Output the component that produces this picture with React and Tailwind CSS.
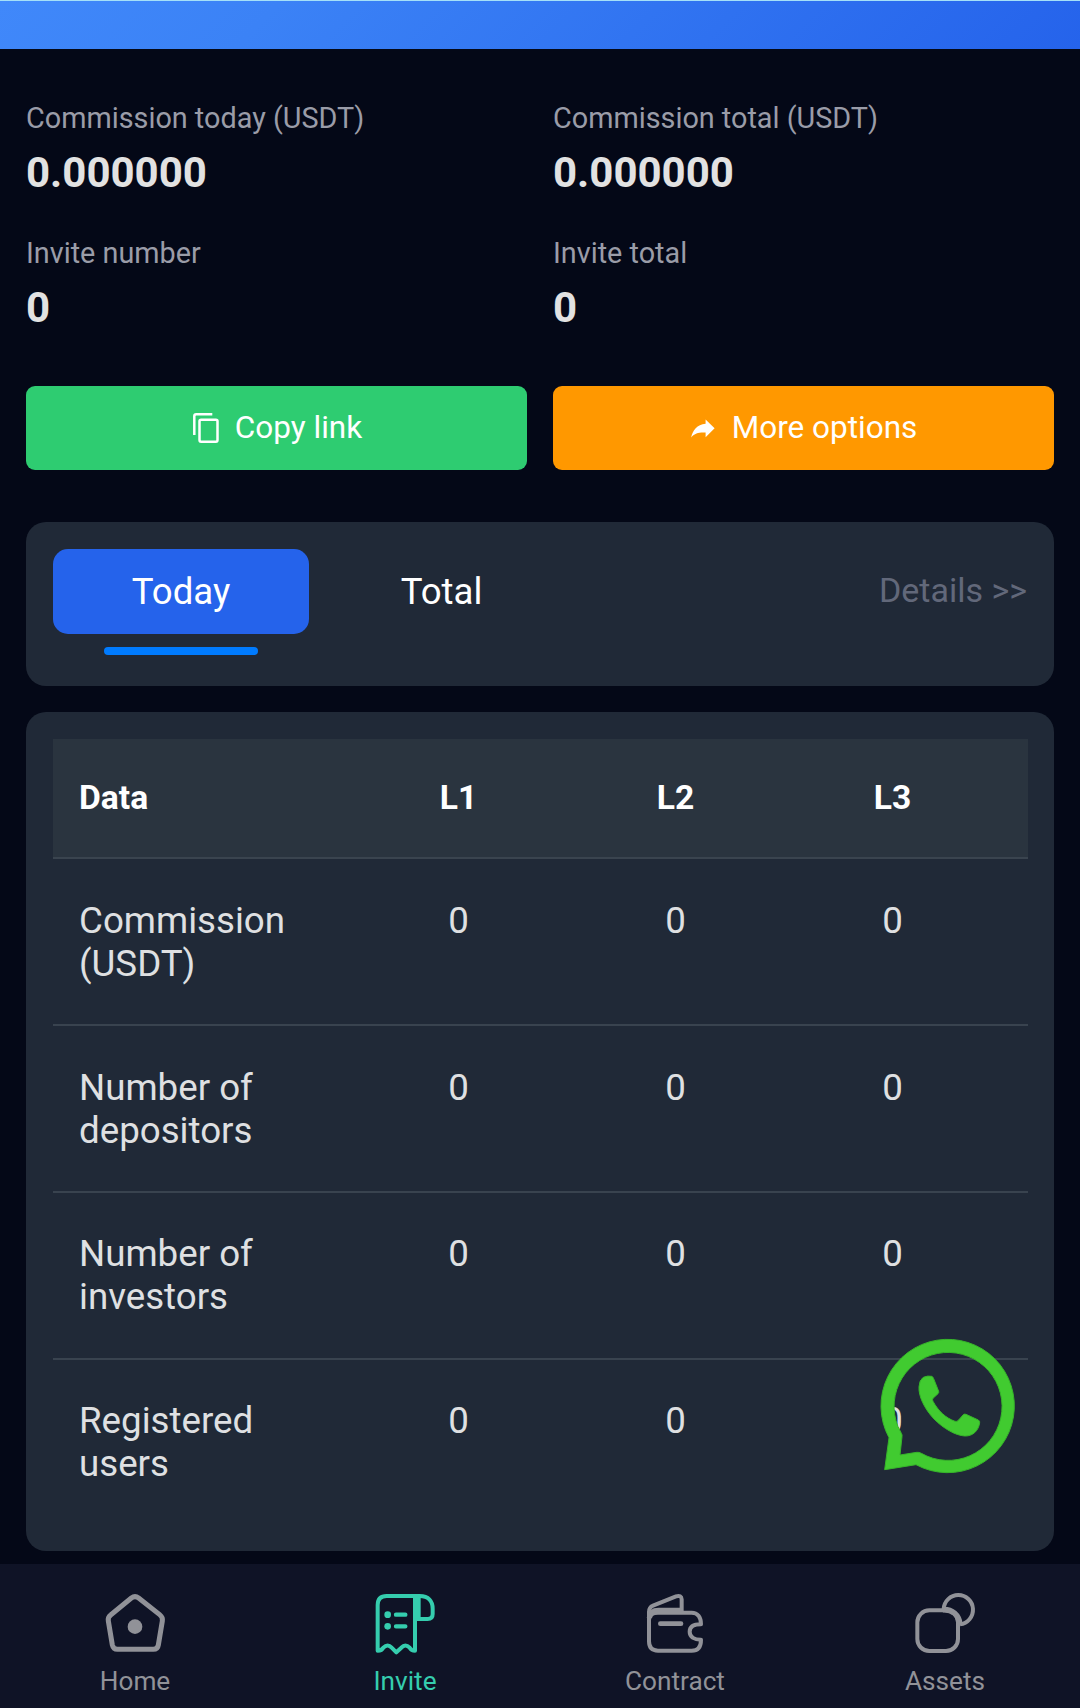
import { useState } from "react";

/* Figures shown at the top of the page */
const stats = [
  { label: "Commission today (USDT)", value: "0.000000" },
  { label: "Commission total (USDT)", value: "0.000000" },
  { label: "Invite number", value: "0" },
  { label: "Invite total", value: "0" },
];

const rows = [
  { name: "Commission (USDT)", values: [0, 0, 0] },
  { name: "Number of depositors", values: [0, 0, 0] },
  { name: "Number of investors", values: [0, 0, 0] },
  { name: "Registered users", values: [0, 0, 0] },
];

/* Icons */
function CopyIcon() {
  return (
    <svg className="w-[26px] h-[30px]" viewBox="0 0 26 30" fill="none" stroke="currentColor" strokeWidth="2.5">
      <path d="M1.3 22V3.2C1.3 2 2 1.3 3.2 1.3H19.3" />
      <rect x="6.5" y="6.7" width="18" height="22" rx="1.6" />
    </svg>
  );
}

function ShareIcon() {
  return (
    <svg className="w-6 h-[19px]" viewBox="0 0 24 19" fill="currentColor">
      <path d="M.2 18.4C1.6 11.6 6 5.4 14.6 4.8V.4L23.6 9.3l-9 9v-4.7C8.4 13.2 4 14 .2 18.4Z" />
    </svg>
  );
}

function HomeIcon() {
  return (
    <svg className="w-[66px] h-[66px]" viewBox="66 93 198 198" fill="none" stroke="currentColor">
      <path
        d="M154 114q11-8 22 0l63 50q10 8 8 19l-12 72q-2 13-15 13H112q-12 0-15-13L85 183q-2-11 7-18Z"
        strokeWidth="15"
      />
      <circle cx="165" cy="200" r="22" fill="currentColor" stroke="none" />
    </svg>
  );
}

function InviteIcon() {
  return (
    <svg
      className="w-[66px] h-[66px]"
      viewBox="96 93 198 198"
      fill="none"
      stroke="currentColor"
      strokeWidth="12"
      strokeLinejoin="round"
      strokeLinecap="round"
    >
      <path d="M225 108H140q-27 0-27 27V272q13 0 17-9 13-13 25 0l14 14 15-14q12-13 25 0 5 9 16 9V108" />
      <path d="M225 108h14c27 0 39 16 39 38v16q0 15-15 15h-33" />
      <path d="M232 110v66" strokeWidth="20" strokeLinecap="butt" />
      <path d="M168 164h28M168 199h28" strokeWidth="13" />
      <circle cx="143" cy="164" r="10" fill="currentColor" stroke="none" />
      <circle cx="143" cy="199" r="10" fill="currentColor" stroke="none" />
    </svg>
  );
}

function ContractIcon() {
  return (
    <svg
      className="w-[66px] h-[66px]"
      viewBox="126 93 198 198"
      fill="none"
      stroke="currentColor"
      strokeWidth="12"
      strokeLinejoin="round"
    >
      <path d="M147 245V156q0-14 12-19l69-28q16-5 17 9v40" />
      <path d="M147 180q0-22 27-22H275c18 0 28 13 28 35-21 0-34 7-34 22s13 24 34 24c0 22-10 33-28 33H174c-18 0-27-10-27-28Z" />
      <path d="M148 174q3-23 28-23h68" strokeWidth="16" />
      <path d="M181 191h62" strokeWidth="14" strokeLinecap="round" />
    </svg>
  );
}

function AssetsIcon() {
  return (
    <svg className="w-[66px] h-[66px]" viewBox="156 153 198 198" fill="none" stroke="currentColor" strokeWidth="12">
      <rect x="172" y="211" width="122" height="122" rx="36" />
      <path d="M251 207a44 44 0 1 1 49 46" />
      <path d="M248 209c28-2 49 15 52 45" strokeWidth="17" />
    </svg>
  );
}

function WhatsAppIcon() {
  return (
    <svg className="w-[180px] h-[170px]" viewBox="0 0 540 510">
      <g fill="#41cb30" stroke="#37b52a" strokeWidth="3" strokeLinejoin="round">
        <path
          fillRule="evenodd"
          d="M87 353A200 200 0 1 1 168 434L74 449ZM126 350L120 405L170 397Q177 396 184 400A162 162 0 1 0 114 320L124 340Q127 344 126 350Z"
        />
        <path d="M190 172Q203 166 216 169Q219 171 221 176L236 214Q237 218 234 221L219 235Q216 239 219 244C235 273 257 294 285 304Q291 306 296 300L309 285Q313 281 318 283L355 300Q360 303 359 309C355 333 338 349 314 348C286 346 251 326 222 297C193 266 175 228 177 200Q178 180 190 172Z" />
      </g>
    </svg>
  );
}

const navItems = [
  { label: "Home", Icon: HomeIcon },
  { label: "Invite", Icon: InviteIcon },
  { label: "Contract", Icon: ContractIcon },
  { label: "Assets", Icon: AssetsIcon },
];

function Stats() {
  return (
    <section className="grid grid-cols-2 gap-x-[26px] px-[26px] pt-[49px]">
      {stats.map((item) => (
        <div key={item.label} className="h-[135px]">
          <p className="text-[28.8px] leading-[40px] text-[#9a9ca8]">{item.label}</p>
          <p className="pt-[10px] text-[42px] leading-[50px] font-bold text-[#e2e2e2]">{item.value}</p>
        </div>
      ))}
    </section>
  );
}

function Tabs({ tab, setTab }) {
  return (
    <section className="mx-[26px] mt-[52px] flex h-[164px] items-start rounded-[20px] bg-[#202937] px-[27px] pt-[27px] text-white">
      {["Today", "Total"].map((name) => (
        <div key={name} className="flex flex-col items-center">
          <button
            onClick={() => setTab(name)}
            className={
              "h-[85px] rounded-[15px] pt-0.5 text-[36.6px] " + (tab === name ? "w-[256px] bg-[#2563eb]" : "w-[265px]")
            }
          >
            {name}
          </button>
          {tab === name && <div className="mt-[13px] h-2 w-[154px] rounded-full bg-[#007bff]"></div>}
        </div>
      ))}
      <a className="ml-auto text-[34px] leading-[83px] text-[#62687a]">Details &gt;&gt;</a>
    </section>
  );
}

function DataTable() {
  return (
    <section className="mx-[26px] mt-[26px] h-[839px] rounded-[20px] bg-[#202937] p-[27px] pr-[26px]">
      <div className="grid h-[120px] grid-cols-[271px_217px_217px_217px] items-center border-b-2 border-[#3a444f] bg-[#2a343f] px-[26px] text-[33.6px] font-bold text-white">
        <div>Data</div>
        <div className="text-center">L1</div>
        <div className="text-center">L2</div>
        <div className="text-center">L3</div>
      </div>
      {rows.map((row) => (
        <div
          key={row.name}
          className="grid h-[167px] grid-cols-[271px_217px_217px_217px] border-b-2 border-[#39434f] px-[26px] pt-10 text-[36.7px] leading-[43px] text-[#dfe0e2] last:border-b-0 nth-[n+4]:pt-[39px]"
        >
          <div>{row.name}</div>
          {row.values.map((value, i) => (
            <div key={i} className="text-center">
              {value}
            </div>
          ))}
        </div>
      ))}
    </section>
  );
}

function BottomNav() {
  return (
    <nav className="mt-[13px] grid h-36 grid-cols-4 bg-[#0f1326] pt-[27px]">
      {navItems.map(({ label, Icon }) => (
        <div
          key={label}
          className={"flex flex-col items-center " + (label === "Invite" ? "text-[#35cdae]" : "text-[#919298]")}
        >
          <Icon />
          <span className="mt-2 text-[26.2px] leading-8">{label}</span>
        </div>
      ))}
    </nav>
  );
}

function App() {
  const [tab, setTab] = useState("Today");

  return (
    <div className="relative h-[1708px] w-[1080px] overflow-hidden bg-[#040817] font-['Roboto',sans-serif]">
      <div className="h-[49px] border-t border-[#a5e0f8] bg-[linear-gradient(135deg,#4088fa,#3b82f6_25%,#2563eb)]"></div>
      <Stats />
      {/* Invite actions */}
      <div className="mx-[26px] mt-[18px] grid grid-cols-2 gap-[26px] text-[31.5px] text-white">
        <button className="flex h-[84px] items-center justify-center gap-4 rounded-[9px] bg-[#2ecc71] pl-0.5">
          <CopyIcon />
          Copy link
        </button>
        <button className="flex h-[84px] items-center justify-center gap-[17px] rounded-[9px] bg-[#ff9800] pl-px">
          <ShareIcon />
          More options
        </button>
      </div>
      <Tabs tab={tab} setTab={setTab} />
      <DataTable />
      <BottomNav />
      {/* Floating support button */}
      <a className="absolute top-[1320px] left-[860px]">
        <WhatsAppIcon />
      </a>
    </div>
  );
}

export default App;
